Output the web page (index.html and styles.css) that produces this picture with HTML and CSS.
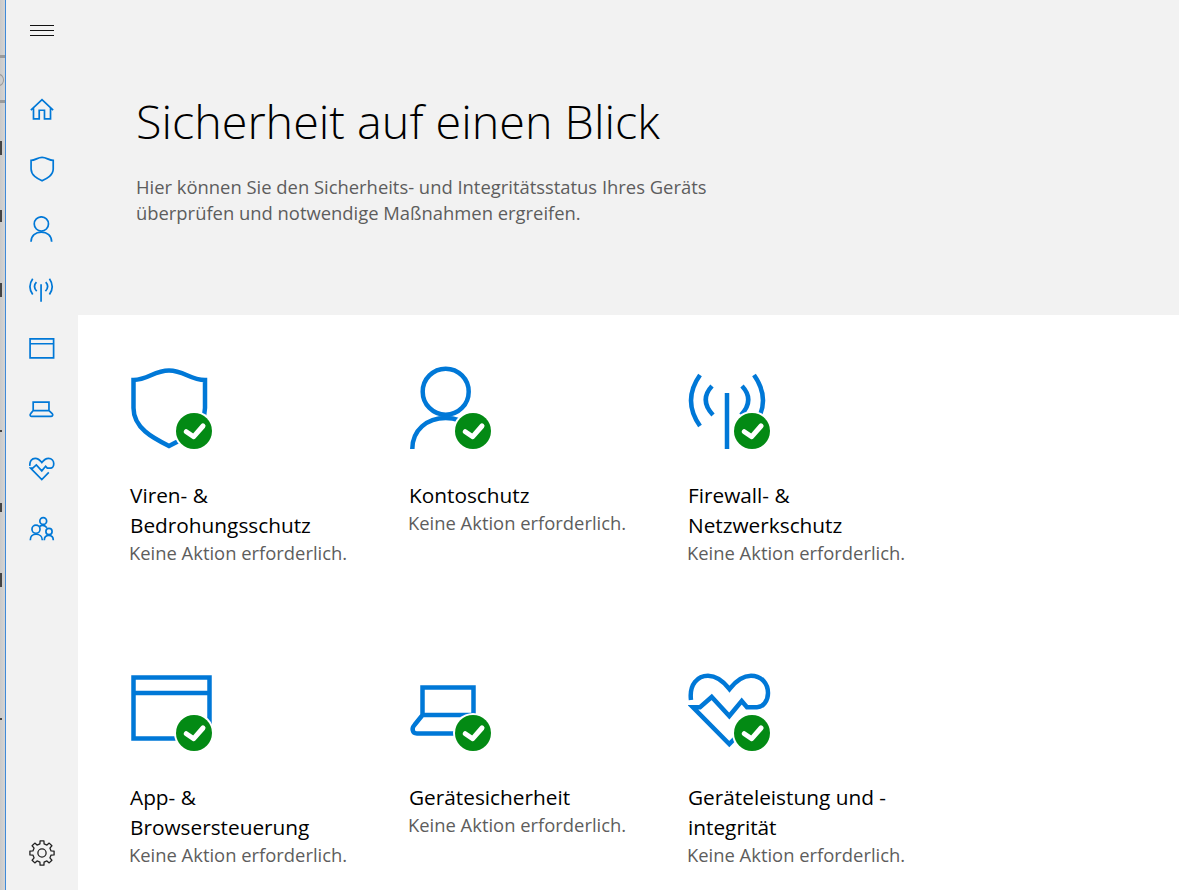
FILE: index.html
```html
<!DOCTYPE html>
<html lang="de">
<head>
    <meta charset="UTF-8">
    <title>Sicherheit auf einen Blick</title>
    <link rel="stylesheet" href="styles.css">
</head>
<body>
    <svg class="defs" width="0" height="0">
        <symbol id="i-shield" viewBox="0 0 84 84"><path d="M3.5 14C18 14 24 4.5 39 4.5S60 14 75 14V42C75 62 55 72 39 80C23 72 3.5 62 3.5 42Z"/></symbol>
        <symbol id="i-person" viewBox="0 0 84 84"><circle cx="36.7" cy="25.7" r="23"/><path d="M3.3 83C3.3 64 18 52 36.7 52S70 64 70 83"/></symbol>
        <symbol id="i-wifi" viewBox="0 0 84 84"><path d="M39 27V83M12 9Q-6 34.5 12 60M66 9Q84 34.5 66 60M24 20Q11 34 25 49M54 20Q67 34 53 49"/></symbol>
        <symbol id="i-window" viewBox="0 0 84 84"><path d="M3.5 9.5H79.5V70.5H3.5ZM3.5 25H79.5"/></symbol>
        <symbol id="i-laptop" viewBox="0 0 84 84"><path d="M13.5 47V19.5H64.5V47M13.5 47H64.5L75 57C78 60 77 65.5 72 65.5H8C3 65.5 2.5 60 5.5 57Z"/></symbol>
        <symbol id="i-heart" viewBox="0 0 84 84"><path d="M3 32C1 16 10 7.7 20 7.7C29 7.7 36 14 41.5 21C47 14 54 7.7 63 7.7C74 7.7 80 16 80 25C80 33 75 39.3 69 39.3H59L53.7 33L41.3 48L23.7 29L12 39.3H5L41.3 76L64 53"/></symbol>
        <symbol id="i-home" viewBox="0 0 84 84"><path d="M6 46L42 12L78 46M14.5 38V74H33V46H50V74H69.5V38"/></symbol>
        <symbol id="i-family" viewBox="0 0 84 84"><circle cx="46" cy="16" r="11"/><circle cx="22.6" cy="42.8" r="13"/><circle cx="64.6" cy="50" r="10"/><path d="M4.2 78C4.2 66 12 59 23 59S43 66 43 78M49.4 78C49.4 69 55 63 64 63S78.5 69 78.5 78M34 34Q46 24 58 38"/></symbol>
    </svg>

    <div class="behind">
        <span class="frag frag-line" style="top: 55px"></span>
        <span class="frag frag-ring" style="top: 74px"></span>
        <span class="frag frag-line" style="top: 100px"></span>
        <span class="frag frag-dark" style="top: 141px; height: 14px"></span>
        <span class="frag frag-dark" style="top: 210px; height: 12px"></span>
        <span class="frag frag-dark" style="top: 283px; height: 14px"></span>
        <span class="frag frag-dark" style="top: 430px; height: 2px"></span>
        <span class="frag frag-dark" style="top: 503px; height: 9px"></span>
        <span class="frag frag-dark" style="top: 573px; height: 14px"></span>
        <span class="frag frag-dark" style="top: 718px; height: 2px"></span>
    </div>

    <nav class="sidebar">
        <a class="menu-button" href="#"><span></span><span></span><span></span></a>
        <div class="nav-items">
            <a href="#"><svg class="nav-icon"><use href="#i-home"/></svg></a>
            <a href="#"><svg class="nav-icon nudge"><use href="#i-shield"/></svg></a>
            <a href="#"><svg class="nav-icon nudge"><use href="#i-person"/></svg></a>
            <a href="#"><svg class="nav-icon"><use href="#i-wifi"/></svg></a>
            <a href="#"><svg class="nav-icon"><use href="#i-window"/></svg></a>
            <a href="#"><svg class="nav-icon"><use href="#i-laptop"/></svg></a>
            <a href="#"><svg class="nav-icon"><use href="#i-heart"/></svg></a>
            <a href="#"><svg class="nav-icon"><use href="#i-family"/></svg></a>
        </div>
        <a class="settings" href="#">
            <svg class="gear" viewBox="0 0 24 24"><path d="M20.38 10.07L23.16 10.23V13.77L20.38 13.93L19.29 16.56L21.14 18.64L18.64 21.14L16.56 19.29L13.93 20.38L13.77 23.16H10.23L10.07 20.38L7.44 19.29L5.36 21.14L2.86 18.64L4.71 16.56L3.62 13.93L.84 13.77V10.23L3.62 10.07L4.71 7.44L2.86 5.36L5.36 2.86L7.44 4.71L10.07 3.62L10.23 .84H13.77L13.93 3.62L16.56 4.71L18.64 2.86L21.14 5.36L19.29 7.44Z"/><circle cx="12" cy="12" r="3.8"/></svg>
        </a>
    </nav>

    <main class="content">
        <header class="header">
            <h1>Sicherheit auf einen Blick</h1>
            <p>Hier können Sie den Sicherheits- und Integritätsstatus Ihres Geräts<br>überprüfen und notwendige Maßnahmen ergreifen.</p>
        </header>
        <section class="cards">
            <a class="card" href="#">
                <span class="card-icon"><svg class="big-icon"><use href="#i-shield"/></svg><svg class="badge" viewBox="0 0 40 40"><circle class="halo" cx="20" cy="20" r="20"/><circle class="dot" cx="20" cy="20" r="18"/><path class="check" d="M12.3 20.7L19.7 25.7L29 15"/></svg></span>
                <h2>Viren- &amp; Bedrohungsschutz</h2>
                <p>Keine Aktion erforderlich.</p>
            </a>
            <a class="card" href="#">
                <span class="card-icon"><svg class="big-icon"><use href="#i-person"/></svg><svg class="badge" viewBox="0 0 40 40"><circle class="halo" cx="20" cy="20" r="20"/><circle class="dot" cx="20" cy="20" r="18"/><path class="check" d="M12.3 20.7L19.7 25.7L29 15"/></svg></span>
                <h2>Kontoschutz</h2>
                <p>Keine Aktion erforderlich.</p>
            </a>
            <a class="card" href="#">
                <span class="card-icon"><svg class="big-icon"><use href="#i-wifi"/></svg><svg class="badge" viewBox="0 0 40 40"><circle class="halo" cx="20" cy="20" r="20"/><circle class="dot" cx="20" cy="20" r="18"/><path class="check" d="M12.3 20.7L19.7 25.7L29 15"/></svg></span>
                <h2>Firewall- &amp; Netzwerkschutz</h2>
                <p>Keine Aktion erforderlich.</p>
            </a>
            <a class="card" href="#">
                <span class="card-icon"><svg class="big-icon"><use href="#i-window"/></svg><svg class="badge" viewBox="0 0 40 40"><circle class="halo" cx="20" cy="20" r="20"/><circle class="dot" cx="20" cy="20" r="18"/><path class="check" d="M12.3 20.7L19.7 25.7L29 15"/></svg></span>
                <h2>App- &amp; Browsersteuerung</h2>
                <p>Keine Aktion erforderlich.</p>
            </a>
            <a class="card" href="#">
                <span class="card-icon"><svg class="big-icon"><use href="#i-laptop"/></svg><svg class="badge" viewBox="0 0 40 40"><circle class="halo" cx="20" cy="20" r="20"/><circle class="dot" cx="20" cy="20" r="18"/><path class="check" d="M12.3 20.7L19.7 25.7L29 15"/></svg></span>
                <h2>Gerätesicherheit</h2>
                <p>Keine Aktion erforderlich.</p>
            </a>
            <a class="card" href="#">
                <span class="card-icon"><svg class="big-icon"><use href="#i-heart"/></svg><svg class="badge" viewBox="0 0 40 40"><circle class="halo" cx="20" cy="20" r="20"/><circle class="dot" cx="20" cy="20" r="18"/><path class="check" d="M12.3 20.7L19.7 25.7L29 15"/></svg></span>
                <h2>Geräteleistung und - integrität</h2>
                <p>Keine Aktion erforderlich.</p>
            </a>
        </section>
    </main>
</body>
</html>
```

FILE: styles.css
```css
* {
    box-sizing: border-box;
}
html, body {
    height: 100%;
}
body {
    margin: 0;
    display: flex;
    overflow: hidden;
    font-family: "Open Sans", "Noto Sans", sans-serif;
    background-color: #fff;
    color: #000;
}
a {
    color: inherit;
    text-decoration: none;
}
.defs {
    position: absolute;
}
.defs symbol {
    overflow: visible;
}

/* window behind this one */
.behind {
    position: relative;
    width: 6px;
    flex-shrink: 0;
    overflow: hidden;
    background: linear-gradient(to right, #c9c9c9, #d4d4d4);
    border-right: 1px solid #3f8ad8;
}
.frag {
    position: absolute;
    left: 0;
}
.frag-line {
    width: 5px;
    height: 3px;
    background-color: #9a9a9a;
}
.frag-ring {
    left: -6px;
    width: 10px;
    height: 12px;
    border: 1px solid #999;
    border-radius: 50%;
}
.frag-dark {
    width: 2px;
    background-color: #444;
}

.sidebar {
    width: 72px;
    flex-shrink: 0;
    display: flex;
    flex-direction: column;
    align-items: center;
    padding-bottom: 7px;
    background-color: #f2f2f2;
}
.sidebar a {
    display: flex;
    align-items: center;
    justify-content: center;
    width: 72px;
    height: 60px;
}
.menu-button {
    flex-direction: column;
    gap: 4px;
    margin-bottom: 19px;
}
.menu-button span {
    width: 24px;
    height: 1px;
    background-color: #111;
}
.nav-icon {
    width: 26px;
    height: 26px;
    fill: none;
    stroke: #0078d7;
    stroke-width: 5.5;
}
.nudge {
    margin-left: 2px;
}
.settings {
    margin-top: auto;
}
.gear {
    width: 26px;
    height: 26px;
    fill: none;
    stroke: #222;
    stroke-width: 1.2;
    stroke-linejoin: round;
}

.content {
    flex: 1;
    min-width: 0;
}
.header {
    height: 315px;
    padding: 86px 0 0 58px;
    background-color: #f2f2f2;
}
.header h1 {
    margin: 0;
    font-size: 46.7px;
    line-height: 70px;
    font-weight: 300;
}
.header p {
    margin: 18px 0 0;
    font-size: 18.4px;
    line-height: 26px;
    color: #5d5d5d;
}
.cards {
    display: grid;
    grid-template-columns: repeat(3, 279px);
    row-gap: 102px;
    padding: 51px 0 0 52px;
}
.card {
    display: block;
}
.card-icon {
    display: block;
    position: relative;
    width: 84px;
    height: 84px;
    margin-bottom: 30px;
}
.big-icon {
    width: 84px;
    height: 84px;
    fill: none;
    stroke: #0078d7;
    stroke-width: 4.5;
}
.badge {
    position: absolute;
    left: 44px;
    top: 45px;
    width: 40px;
    height: 40px;
}
.halo {
    fill: #fff;
}
.dot {
    fill: #038a14;
}
.check {
    fill: none;
    stroke: #fff;
    stroke-width: 5;
    stroke-linecap: round;
    stroke-linejoin: round;
}
.card h2 {
    margin: 0;
    max-width: 230px;
    font-size: 20.8px;
    line-height: 30px;
    font-weight: 400;
}
.card p {
    margin: 0 0 0 -1px;
    font-size: 18.4px;
    line-height: 26px;
    color: #5d5d5d;
}
```
